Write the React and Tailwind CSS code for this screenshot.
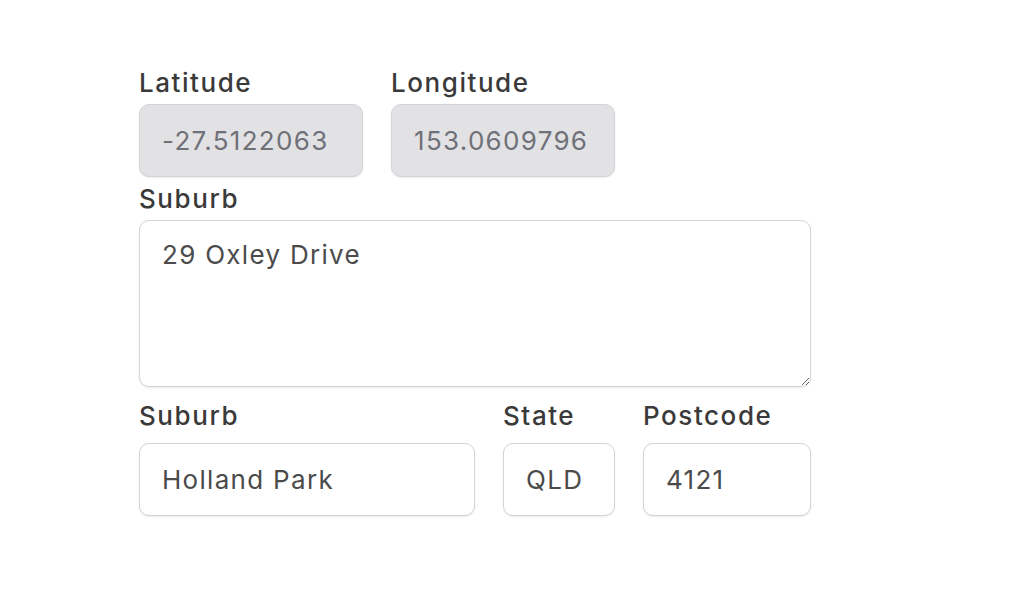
import { useState } from 'react';

const labelCls = "block text-[26px] leading-[34px] font-medium text-[#3a3a3a] tracking-[0.06em]";
const boxCls =
  "block w-full h-[73px] rounded-[10px] border border-[#d4d4d8] px-[22px] text-[26px] tracking-[0.05em] text-[#4b4b4b] shadow-[0_1px_2px_rgba(0,0,0,0.08)] outline-none";

function Field({ label, value, width, disabled, onChange, labelClass = "mb-[6px]" }) {
  return (
    <div className={width}>
      <label className={`${labelCls} ${labelClass}`}>{label}</label>
      <input
        type="text"
        value={value}
        disabled={disabled}
        onChange={onChange}
        className={`${boxCls} ${disabled ? 'bg-[#e2e2e5] text-[#707078]' : 'bg-white'}`}
      />
    </div>
  );
}

export default function App() {
  const [address, setAddress] = useState('29 Oxley Drive');
  const [suburb, setSuburb] = useState('Holland Park');
  const [state, setState] = useState('QLD');
  const [postcode, setPostcode] = useState('4121');

  return (
    <div className="min-h-[590px] bg-white pt-[66px] pl-[139px] font-['Inter',sans-serif]">
      <div className="w-[672px] flex flex-col">
        <div className="flex gap-[28px]">
          <Field label="Latitude" value="-27.5122063" width="w-[224px]" disabled labelClass="mb-[4px]" />
          <Field label="Longitude" value="153.0609796" width="w-[224px]" disabled labelClass="mb-[4px]" />
        </div>

        <div className="mt-[5px]">
          <label className={`${labelCls} mb-[4px]`}>Suburb</label>
          <textarea
            value={address}
            onChange={(e) => setAddress(e.target.value)}
            className="block w-full h-[167px] rounded-[10px] border border-[#d4d4d8] bg-white px-[22px] py-[16px] text-[26px] leading-[36px] tracking-[0.05em] text-[#4b4b4b] shadow-[0_1px_2px_rgba(0,0,0,0.08)] outline-none"
          />
        </div>

        <div className="mt-[12px] flex gap-[28px]">
          <Field label="Suburb" value={suburb} width="w-[336px]" onChange={(e) => setSuburb(e.target.value)} labelClass="mb-[10px]" />
          <Field label="State" value={state} width="w-[112px]" onChange={(e) => setState(e.target.value)} labelClass="mb-[10px]" />
          <Field label="Postcode" value={postcode} width="w-[168px]" onChange={(e) => setPostcode(e.target.value)} labelClass="mb-[10px]" />
        </div>
      </div>
    </div>
  );
}
